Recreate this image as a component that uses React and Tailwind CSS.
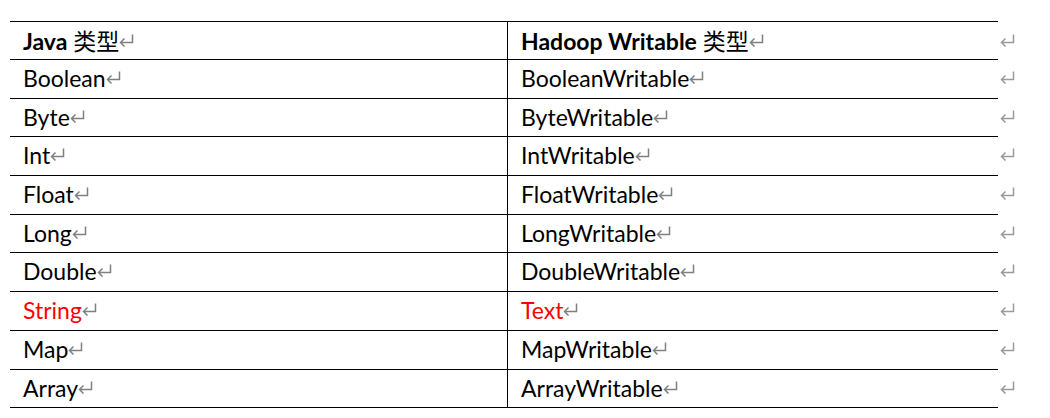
const rows = [
  ["Boolean", "BooleanWritable"],
  ["Byte", "ByteWritable"],
  ["Int", "IntWritable"],
  ["Float", "FloatWritable"],
  ["Long", "LongWritable"],
  ["Double", "DoubleWritable"],
  ["String", "Text", true],
  ["Map", "MapWritable"],
  ["Array", "ArrayWritable"],
];

function Mark({ light }) {
  return (
    <svg width="15" height="13" viewBox="0 0 15 13" className="mt-[6px] shrink-0">
      <path
        d="M13.5 0.5 V8.5 H1.5 M5.5 4.5 L1.5 8.5 L5.5 12.5"
        fill="none"
        stroke={light ? "#9a9a9a" : "#808080"}
        strokeWidth="1.5"
      />
    </svg>
  );
}

function Row({ left, right, red }) {
  const color = red ? "text-[#ff0000]" : "text-black";
  return (
    <div className="flex items-start">
      <div className="flex w-[988px] h-[38.7px] box-border border-b border-black">
        <div className={"w-[497px] pl-[13px] pt-[5px] flex items-start " + color}>
          <span>{left}</span>
          <Mark />
        </div>
        <div className={"flex-1 border-l border-black pl-[13px] pt-[5px] flex items-start " + color}>
          <span>{right}</span>
          <Mark />
        </div>
      </div>
      <div className="pl-[2px] pt-[5px]">
        <Mark light />
      </div>
    </div>
  );
}

export default function App() {
  return (
    <div
      className="w-[1050px] h-[418px] bg-white pt-[21px] pl-[10px] text-[23px] leading-[26px]"
      style={{ fontFamily: 'Lato, "Noto Sans CJK SC", sans-serif' }}
    >
      <div className="flex items-start">
        <div className="flex w-[988px] h-[39px] box-border border-y border-black">
          <div className="w-[497px] pl-[13px] pt-[6px] flex items-start text-black">
            <span>
              <span className="font-bold">Java</span> 类型
            </span>
            <Mark />
          </div>
          <div className="flex-1 border-l border-black pl-[13px] pt-[6px] flex items-start text-black">
            <span>
              <span className="font-bold">Hadoop Writable</span> 类型
            </span>
            <Mark />
          </div>
        </div>
        <div className="pl-[2px] pt-[7px]">
          <Mark light />
        </div>
      </div>
      {rows.map(([l, r, red]) => (
        <Row key={l} left={l} right={r} red={red} />
      ))}
    </div>
  );
}
